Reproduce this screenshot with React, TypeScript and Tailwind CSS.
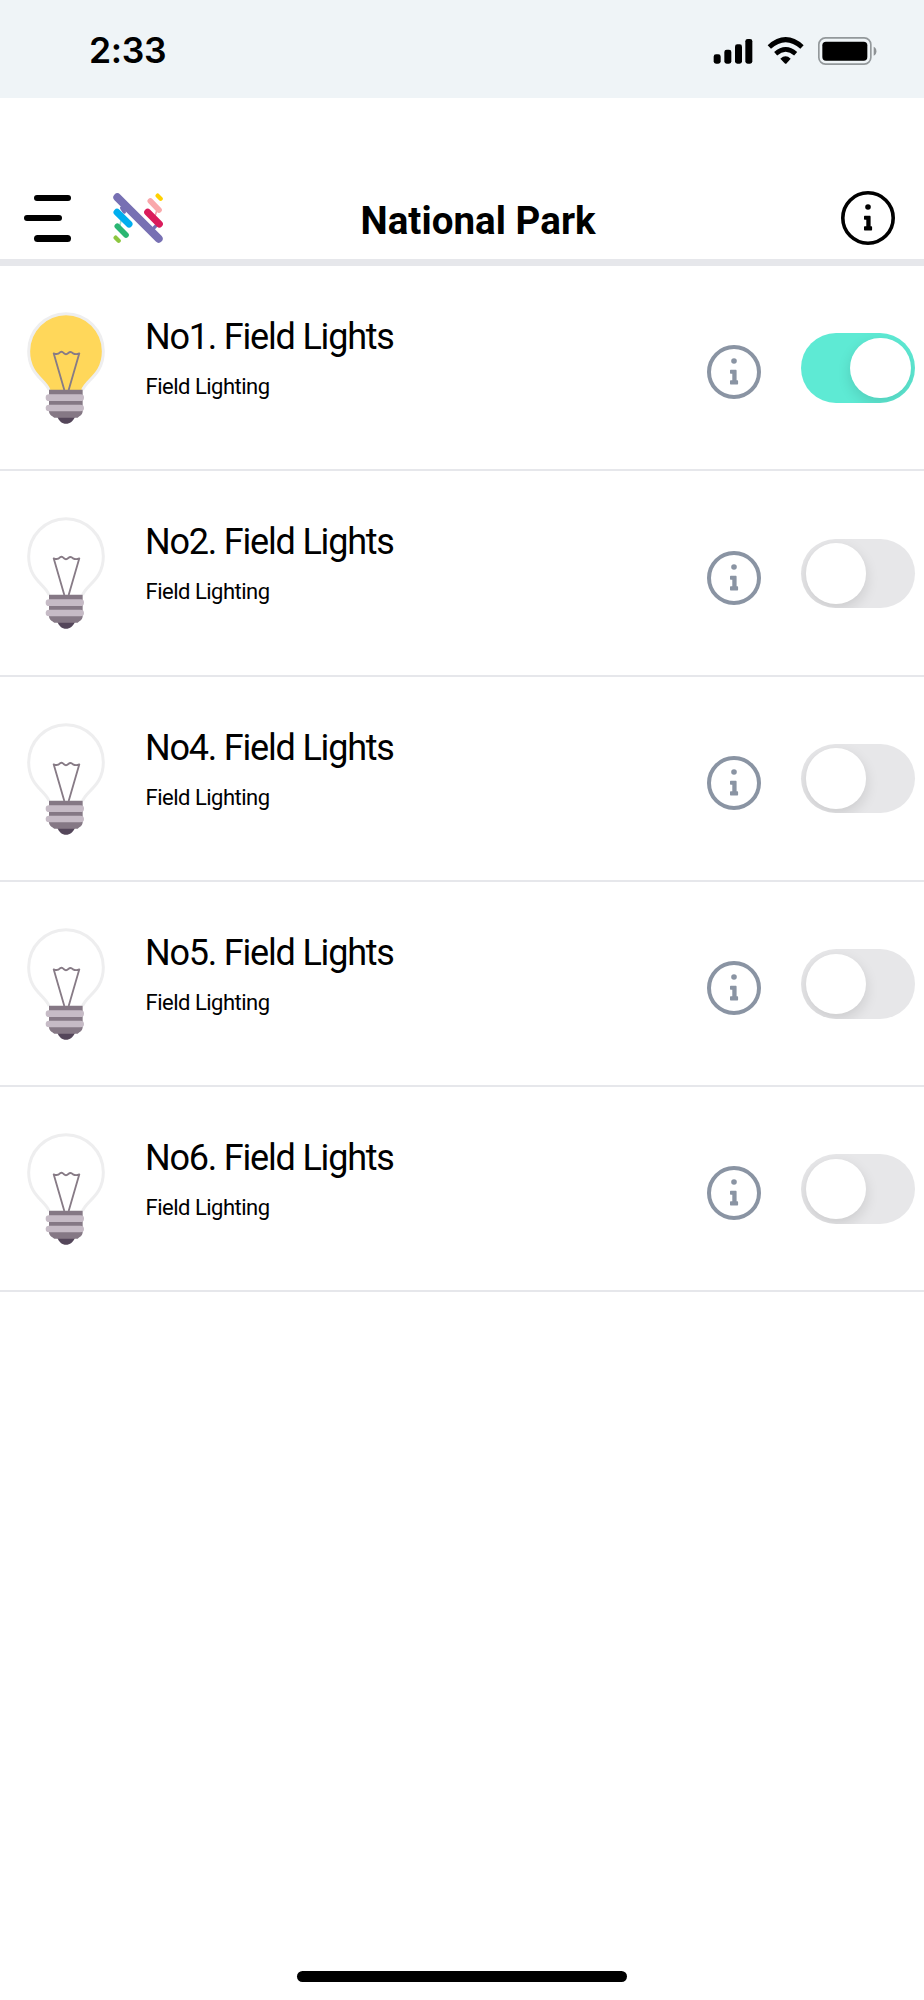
import React, { useState } from 'react';

interface Light {
  id: number;
  name: string;
  category: string;
  on: boolean;
}

const INITIAL_LIGHTS: Light[] = [
  { id: 1, name: 'No1. Field Lights', category: 'Field Lighting', on: true },
  { id: 2, name: 'No2. Field Lights', category: 'Field Lighting', on: false },
  { id: 4, name: 'No4. Field Lights', category: 'Field Lighting', on: false },
  { id: 5, name: 'No5. Field Lights', category: 'Field Lighting', on: false },
  { id: 6, name: 'No6. Field Lights', category: 'Field Lighting', on: false },
];

const InfoIcon: React.FC<{ strokeWidth: number }> = ({ strokeWidth }) => (
  <svg className="block h-[54px] w-[54px]" viewBox="0 0 54 54" fill="none">
    <circle cx="27" cy="27" r={27 - strokeWidth / 2} stroke="currentColor" strokeWidth={strokeWidth} />
    <circle cx="27" cy="16" r="2.8" fill="currentColor" />
    <path
      d="M24 24.8h4.6c.6 0 1 .4 1 1v9.5h.5c.6 0 1 .4 1 1v2.2c0 .6-.4 1-1 1H24c-.6 0-1-.4-1-1v-2.2c0-.6.4-1 1-1h1.3v-6.5H24c-.6 0-1-.4-1-1v-2c0-.6.4-1 1-1z"
      fill="currentColor"
    />
  </svg>
);

const BulbIcon: React.FC<{ on: boolean }> = ({ on }) => (
  <svg className="block h-[112px] w-[78px]" viewBox="81 66 234 336" fill="none">
    <path
      d="M147 300C138 270 86 255 86 184C86 121 137 71 198 71C259 71 310 121 310 184C310 255 257 270 248 300Z"
      fill={on ? '#ffd75a' : '#ffffff'}
    />
    <path
      d="M147 300C138 270 86 255 86 184C86 121 137 71 198 71C259 71 310 121 310 184C310 255 257 270 248 300"
      stroke="#eeeeef"
      strokeWidth="9"
    />
    <path
      d="M193 300L161 190Q173 195 180 187Q186 183 191 189Q198 196 205 189Q212 183 219 190Q228 195 238 190L206 300"
      stroke="#877b86"
      strokeWidth="5.5"
      strokeLinejoin="round"
    />
    <path d="M172 380h53c-6 14-15 21-27 21s-21-8-26-21z" fill="#54465a" />
    <path d="M147 299h101v65c0 9-8 14-15 19h-70c-8-5-16-10-16-19z" fill="#857885" />
    <rect x="137" y="313" width="115" height="20" rx="10" fill="#c6bbc6" />
    <rect x="137" y="344" width="115" height="20" rx="10" fill="#c6bbc6" />
  </svg>
);

const Toggle: React.FC<{ on: boolean; label: string; onChange: () => void }> = ({ on, label, onChange }) => (
  <button
    type="button"
    role="switch"
    aria-checked={on}
    aria-label={label}
    onClick={onChange}
    className={`flex h-[69.5px] w-[114px] shrink-0 items-center overflow-hidden rounded-full px-[4.5px] ${
      on ? 'justify-end bg-[#5eead4]' : 'justify-start bg-[#e7e7e9]'
    }`}
  >
    <span className="h-[60.5px] w-[60.5px] rounded-full bg-white shadow-[0_5px_14px_rgba(0,0,0,0.12)]" />
  </button>
);

const StatusBar: React.FC = () => (
  <div className="flex h-[98px] items-center justify-between bg-[#eff4f7] pt-[3px] pr-[47px] pl-[89px]">
    <span className="font-['Inter',sans-serif] text-[35.5px] leading-none font-semibold tracking-[-0.3px] text-black">
      2:33
    </span>
    <svg className="block h-[28px] w-[164px]" viewBox="266 109 492 84" fill="none">
      <g fill="#000">
        <rect x="268" y="161" width="21" height="28" rx="7" />
        <rect x="300" y="147" width="21" height="42" rx="7" />
        <rect x="332" y="131" width="21" height="58" rx="7" />
        <rect x="363" y="115" width="21" height="74" rx="7" />
        <path d="M468 174Q484 160 499 174L487 188Q484 191 481 188Z" />
        <rect x="594" y="123" width="135" height="57" rx="11" />
      </g>
      <path d="M435 139Q484 95 533 139" stroke="#000" strokeWidth="15" />
      <path d="M454 159Q484 133 514 159" stroke="#000" strokeWidth="14" />
      <rect x="583.5" y="111.5" width="156" height="79" rx="20" stroke="#93989b" strokeWidth="5" />
      <path d="M748 138c11 4 11 23 0 27z" fill="#8f9396" />
    </svg>
  </div>
);

const Logo: React.FC = () => (
  <svg className="block h-[50px] w-[50px]" viewBox="338 579 150 150" fill="none" strokeLinecap="round">
    <path d="M364 624L372 636M455 690L468 676" stroke="#7770b3" strokeWidth="10" />
    <path d="M362 662L358 680" stroke="#9bdcd0" strokeWidth="5" />
    <path d="M470 630L464 648" stroke="#f5a0ad" strokeWidth="5" />
    <path d="M350 637L386 672" stroke="#00aeef" strokeWidth="21" />
    <path d="M351 679L377 705" stroke="#2bb673" strokeWidth="17" />
    <path d="M346 713L355 722" stroke="#8cc63f" strokeWidth="13" />
    <path d="M472 587L481 596" stroke="#ffd100" strokeWidth="13" />
    <path d="M450 603L476 630" stroke="#f9a8ab" strokeWidth="17" />
    <path d="M442 637L477 672" stroke="#da1c5c" strokeWidth="21" />
    <path d="M351 592L475 716" stroke="#7770b3" strokeWidth="24" />
  </svg>
);

const Header: React.FC = () => (
  <header className="flex h-[168px] items-end border-b-[7px] border-[#e6e7eb] pr-[29px] pb-[14px] pl-[24px]">
    <div className="flex w-[138.5px] items-center justify-between pb-[2px]">
      <button type="button" aria-label="Menu" className="flex h-[47px] w-[48px] flex-col justify-between">
        <span className="ml-[9.5px] h-[6.5px] w-[37.5px] rounded-full bg-black" />
        <span className="h-[6.5px] w-[37.5px] rounded-full bg-black" />
        <span className="ml-[9.5px] h-[6.5px] w-[37.5px] rounded-full bg-black" />
      </button>
      <Logo />
    </div>
    <h1 className="mr-auto ml-[198px] text-[38.5px] leading-[48px] font-bold tracking-[0.05px] whitespace-nowrap">
      National Park
    </h1>
    <button type="button" aria-label="Site information" className="text-black">
      <InfoIcon strokeWidth={3.6} />
    </button>
  </header>
);

const LightRow: React.FC<{ light: Light; onToggle: (id: number) => void }> = ({ light, onToggle }) => (
  <li className="flex h-[205.3px] items-start border-b-2 border-[#e6e7eb] pr-[9px] pl-[27px]">
    <div className="pt-[46px]">
      <BulbIcon on={light.on} />
    </div>
    <div className="flex-1 pt-[47px] pl-[40px]">
      <div className="text-[36px] leading-[48px] tracking-[-1.2px] whitespace-nowrap">{light.name}</div>
      <div className="pt-[10px] pl-[0.5px] text-[22px] leading-[32px] tracking-[-0.5px] whitespace-nowrap">
        {light.category}
      </div>
    </div>
    <button type="button" aria-label={`About ${light.name}`} className="mt-[79.3px] mr-[40px] text-[#8a94a3]">
      <InfoIcon strokeWidth={4} />
    </button>
    <div className="pt-[67.3px]">
      <Toggle on={light.on} label={light.name} onChange={() => onToggle(light.id)} />
    </div>
  </li>
);

const App: React.FC = () => {
  const [lights, setLights] = useState<Light[]>(INITIAL_LIGHTS);

  const handleToggle = (id: number) => {
    setLights((prev) => prev.map((l) => (l.id === id ? { ...l, on: !l.on } : l)));
  };

  return (
    <div className="flex h-[2000px] w-[924px] flex-col bg-white font-['Roboto',sans-serif] text-black">
      <StatusBar />
      <Header />
      <ul className="flex-1">
        {lights.map((light) => (
          <LightRow key={light.id} light={light} onToggle={handleToggle} />
        ))}
      </ul>
      {/* Home indicator */}
      <div className="flex justify-center pb-[18px]">
        <div className="h-[11px] w-[330px] rounded-full bg-black" />
      </div>
    </div>
  );
};

export default App;
